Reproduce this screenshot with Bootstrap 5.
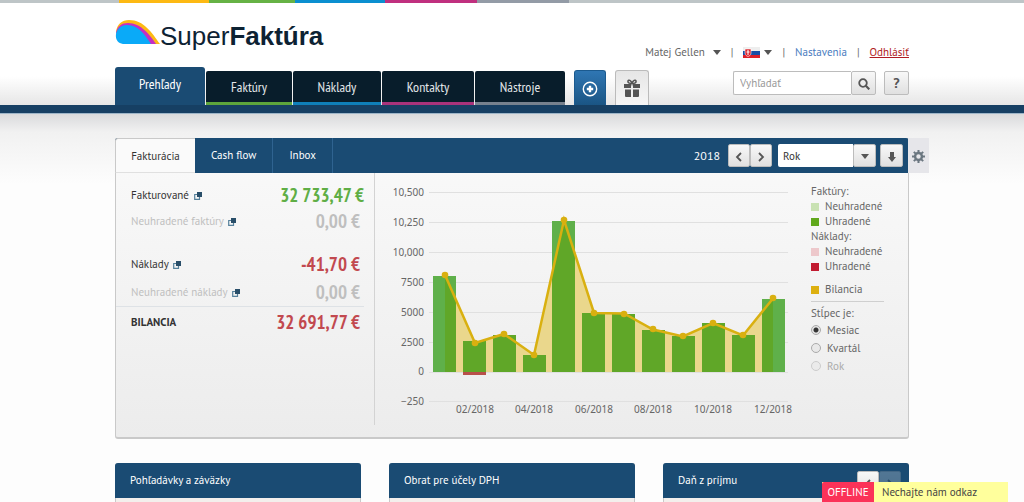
<!DOCTYPE html>
<html lang="sk">
<head>
<meta charset="utf-8">
<meta name="viewport" content="width=device-width, initial-scale=1">
<title>SuperFaktúra – Prehľady</title>
<link href="https://cdn.jsdelivr.net/npm/bootstrap@5.3.0/dist/css/bootstrap.min.css" rel="stylesheet">
<style>
:root{--navy:#1a4b73;--line:#c9c9c9}
body{font-family:"PT Sans",Lato,"Noto Sans",sans-serif;font-size:11px;line-height:16px;color:#333;background:#fdfdfd}
button,input,select{font-family:inherit;font-size:11px}
.wrap{width:100%;max-width:794px;margin:0 auto}
.stripe{height:3px;background:#bec5c7}
.stripe span{height:3px}
.s-y{width:90px;background:#fdb913}.s-g{width:86px;background:#66b245}.s-b{width:90px;background:#0b8fd0}.s-m{width:92px;background:#c0307f}.s-s{width:92px;background:#939ba6}
.site-head{background:linear-gradient(#fff 72%,#e6e6e6);padding-top:16px}
.logo-line{height:48px;color:#0d2233;font:26px/34px "Liberation Sans",Arial,sans-serif}
.narrow{font-family:"PT Sans Narrow","Roboto Condensed",Lato,sans-serif}
.main-tabs{gap:1px}
.main-tabs a{height:34px;line-height:33px;font-size:14px;color:#e2e6e9;background:#081d2b;text-align:center;text-decoration:none;border-radius:2px 2px 0 0;border-bottom:3px solid}
.main-tabs a.current{width:90px;height:38px;line-height:35px;background:var(--navy);border-color:var(--navy);color:#fff;border-radius:3px 3px 0 0}
.t-g{width:86px;border-color:#5da53c!important}.t-b{width:88px;border-color:#0f7fb9!important}.t-m{width:92px;border-color:#a8337b!important}.t-s{width:90px;border-color:#76818e!important}
.sq{width:32px;height:35px;border:1px solid #1b5a8f;border-bottom:0;border-radius:3px 3px 0 0;background:linear-gradient(#2f76b3,#1a5584);padding:0}
.sq.light{width:34px;border-color:#bbb;background:linear-gradient(#e6e6e6,#f6f6f6)}
.bar{height:9px;background:#163f63;border-bottom:1px solid #9db5c8}
.shade{background:linear-gradient(#d9dadc,#f1f1f1 18px,#fdfdfd 70px)}
.user{gap:10px;color:#666;margin-bottom:7px}
.user button{border:0;background:none;padding:0;color:#666}
.user a{text-decoration:none;color:#4a7cc0}
.user a.out{color:#b01c24;text-decoration:underline}
.grey-btn{border:1px solid #bcbcbc;background:linear-gradient(#f8f8f8,#e0e0e0);border-radius:2px;color:#555;padding:0}
.grey-btn svg,.sq svg,.gear svg{vertical-align:middle}
.mark-q{font-size:14px;line-height:20px}
.search{margin-bottom:10px}
.find{width:118px;height:24px;border:1px solid #bcbcbc;border-right:0;border-radius:2px 0 0 2px;padding:0 6px;color:#555;background:#fff}
.find::placeholder{color:#999}
.panel{border:1px solid var(--line);border-bottom-width:2px;border-radius:3px;background:linear-gradient(#fafafa,#ececec)}
.panel-head{height:35px;margin:-1px -1px 0;background:var(--navy);border-radius:3px 3px 0 0;color:#fff}
.panel-head a{height:35px;line-height:34px;color:#fff;text-decoration:none;text-align:center;border-right:1px solid #2f6390}
.panel-head a.current{width:80px;color:#333;background:#fafafa;border:1px solid var(--line);border-right:0;border-bottom-color:#e0e0e0;border-radius:3px 0 0 0}
.year{font-size:12px}
.ctl{height:23px}
.next{margin-right:6px}
.rok{width:75px;border:0;border-radius:2px 0 0 2px;background:#fff;appearance:none;padding:0 5px;color:#333}
.gear{position:absolute;left:100%;top:-1px;width:21px;height:35px;background:#e6e6ea;border:0;padding:0}
.sums{width:259px;padding:9px 10px 0 0;border-right:1px solid #d3d3d3;margin-bottom:12px}
.sums .item{height:26px;padding-left:15px}
.sums .tall{height:28px}
.sums .last{height:30px}
.sums a{color:#333;text-decoration:none}
.sums a svg{margin-left:2px}
.sums .pale a,.pale .amt{color:#bfbfbf}
.amt{font-size:19px;font-weight:700;color:#c2494f;padding-right:4px}
.amt.plus{color:#5fae45;padding-right:0}
.legend{width:97px;padding-top:11px;line-height:15px;color:#666}
.key{width:8px;height:8px;margin-right:6px}
.legend input{appearance:none;width:10px;height:10px;border:1px solid #aaa;border-radius:50%;background:#e8e8e8;margin:0 6px 0 0}
.legend input:checked{background:radial-gradient(#333 2px,#e4e4e4 3px)}
.legend label{height:18px}
.chart text{font-family:"Noto Sans",sans-serif;font-size:10px;fill:#666}
.boxes{gap:28px}
.box{border:1px solid var(--line);border-bottom:0;background:#f3efec;border-radius:3px 3px 0 0}
.box h2{height:35px;margin:-1px -1px 0;padding-left:15px;font-size:11px;font-weight:400;line-height:34px;color:#fff;background:var(--navy);border-radius:3px 3px 0 0}
.box h2 button{line-height:20px}
.chat{right:16px;bottom:0;height:20px;line-height:20px;background:#ffff9c;color:#444;width:186px;text-decoration:none}
.chat b{width:52px;background:#fb3258;color:#fff;font-weight:400;text-align:center;border-radius:2px 0 0 0}
</style>
<script src="https://cdn.jsdelivr.net/npm/bootstrap@5.3.0/dist/js/bootstrap.bundle.min.js"></script>
</head>
<body class="d-flex flex-column min-vh-100">
<svg class="d-none">
  <symbol id="ext" viewBox="0 0 8 8"><path d="M3 2.500H.700v4.800h4.800V5" fill="none" stroke="#56819b" stroke-width="1.200"/><path d="M3 0h5v5H3z" fill="#294e69"/></symbol>
  <symbol id="lt" viewBox="0 0 8 10"><path d="M6 1 2 5l4 4" fill="none" stroke="#555" stroke-width="1.800"/></symbol>
  <symbol id="gt" viewBox="0 0 8 10"><path d="m2 1 4 4-4 4" fill="none" stroke="#555" stroke-width="1.800"/></symbol>
  <symbol id="down" viewBox="0 0 8 5"><path d="M0 0h8L4 5z" fill="#555"/></symbol>
</svg>
<div class="stripe"><div class="wrap d-flex ps-1"><span class="s-y"></span><span class="s-g"></span><span class="s-b"></span><span class="s-m"></span><span class="s-s"></span></div></div>
<header class="site-head">
  <div class="wrap d-flex justify-content-between align-items-end">
    <div class="logo-line d-flex">
      <svg width="45" height="26" viewBox="0 0 45 26"><path d="M1 13C2 5 7 1 14 1c15 0 23 13 31 24H12z" fill="#fdb913"/><path d="M1 14C2 7 7 4 13 4c13 0 22 12 28 21H12z" fill="#c52fc3"/><path d="M8 25C-3 24-1 6 12 6c12 0 18 10 24 19z" fill="#0aaaf8"/></svg>
      <span>Super<b>Faktúra</b></span>
    </div>
    <div class="user d-flex align-items-center text-nowrap">
      <button class="d-flex align-items-center gap-2">Matej Gellen <svg width="8" height="5"><use href="#down"/></svg></button><span>|</span>
      <button class="d-flex align-items-center gap-1" aria-label="Jazyk"><svg width="17" height="11" viewBox="0 0 17 11"><path d="M0 0h17v4H0z" fill="#eee"/><path d="M0 4h17v4H0z" fill="#174ea6"/><path d="M0 8h17v3H0z" fill="#dc2029"/><path d="M2 2h6v4c0 2-1.500 3-3 3.500C3.500 9 2 8 2 6z" fill="#dc2029" stroke="#fff" stroke-width=".6"/><path d="M5 3v5M3.500 5h3" stroke="#fff"/></svg> <svg width="8" height="5"><use href="#down"/></svg></button>
      <span>|</span><a href="#">Nastavenia</a><span>|</span><a class="out" href="#">Odhlásiť</a>
    </div>
  </div>
  <div class="wrap d-flex justify-content-between align-items-end">
    <nav class="main-tabs d-flex align-items-end narrow">
      <a class="current" href="#">Prehľady</a><a class="t-g" href="#">Faktúry</a><a class="t-b" href="#">Náklady</a><a class="t-m" href="#">Kontakty</a><a class="t-s" href="#">Nástroje</a>
      <button class="sq ms-2" aria-label="Pridať"><svg width="16" height="16" viewBox="0 0 16 16"><circle cx="8" cy="8" r="6.700" fill="none" stroke="#fff" stroke-width="1.400"/><path d="M8 4.800v6.400M4.800 8h6.400" stroke="#fff" stroke-width="2.400"/></svg></button>
      <button class="sq light ms-2" aria-label="Darček"><svg width="16" height="18" viewBox="0 0 16 18"><path d="M0 5h7v4H0zM9 5h7v4H9zM1 10.500h6V18H2a1 1 0 0 1-1-1zM9 10.500h6V17a1 1 0 0 1-1 1H9z" fill="#555"/><path d="M8 4.500C5 4.500 3.500 3.500 4 2s3-1 4 2.500C9 1 11.500.500 12 2s-1 2.500-4 2.500" fill="none" stroke="#555" stroke-width="1.600"/></svg></button>
    </nav>
    <form class="search d-flex">
      <input class="find" type="search" placeholder="Vyhľadať" aria-label="Vyhľadať">
      <button class="grey-btn" style="width:25px" aria-label="Hľadať"><svg width="12" height="12" viewBox="0 0 12 12"><circle cx="5" cy="5" r="3.800" fill="none" stroke="#555" stroke-width="1.800"/><path d="m7.800 7.800 3.500 3.500" stroke="#555" stroke-width="2.200"/></svg></button>
      <button class="grey-btn mark-q ms-2 fw-bold" style="width:25px" type="button">?</button>
    </form>
  </div>
</header>
<div class="bar"></div>
<main class="shade flex-grow-1 d-flex flex-column pt-4">
  <section class="wrap panel position-relative mb-4">
    <div class="panel-head d-flex align-items-center">
      <a class="current" href="#">Fakturácia</a><a class="px-3" href="#">Cash flow</a><a class="px-3" href="#">Inbox</a>
      <span class="ms-auto me-2 year">2018</span>
      <button class="grey-btn ctl" style="width:22px" aria-label="Predchádzajúci"><svg width="8" height="10"><use href="#lt"/></svg></button><button class="grey-btn ctl next" style="width:22px" aria-label="Nasledujúci"><svg width="8" height="10"><use href="#gt"/></svg></button>
      <select class="rok ctl" aria-label="Obdobie"><option>Rok</option></select><button class="grey-btn ctl me-1" style="width:23px" aria-label="Vybrať"><svg width="8" height="5"><use href="#down"/></svg></button>
      <button class="grey-btn ctl next" style="width:23px" aria-label="Stiahnuť"><svg width="8" height="10" viewBox="0 0 8 10"><path d="M2 0h4v5h2L4 10 0 5h2z" fill="#555"/></svg></button>
    </div>
    <button class="gear" aria-label="Nastavenia panela"><svg width="13" height="13" viewBox="0 0 14 14"><circle cx="7" cy="7" r="3.700" fill="none" stroke="#6b7780" stroke-width="2.600"/><path d="M7 0v3M7 11v3M0 7h3M11 7h3M2 2l2.200 2.200M9.800 9.800 12 12M12 2 9.800 4.200M4.200 9.800 2 12" stroke="#6b7780" stroke-width="2.200"/></svg></button>
    <div class="d-flex">
      <div class="sums">
        <div class="item d-flex justify-content-between align-items-center"><a href="#">Fakturované <svg width="8" height="8"><use href="#ext"/></svg></a><span class="amt plus narrow">32 733,47 €</span></div>
        <div class="item pale d-flex justify-content-between align-items-center"><a href="#">Neuhradené faktúry <svg width="8" height="8"><use href="#ext"/></svg></a><span class="amt narrow">0,00 €</span></div>
        <div class="item tall d-flex justify-content-between align-items-center mt-3"><a href="#">Náklady <svg width="8" height="8"><use href="#ext"/></svg></a><span class="amt narrow">-41,70 €</span></div>
        <div class="item tall pale d-flex justify-content-between align-items-center"><a href="#">Neuhradené náklady <svg width="8" height="8"><use href="#ext"/></svg></a><span class="amt narrow">0,00 €</span></div>
        <div class="item last d-flex justify-content-between align-items-center border-top"><strong>BILANCIA</strong><span class="amt narrow">32 691,77 €</span></div>
      </div>
      <div class="flex-grow-1">
        <svg class="chart w-100 d-block" viewBox="375 173 436 264" role="img" aria-label="Bilancia 2018">
          <path d="M429 192.500h359M429 222.500h359M429 252.500h359M429 282.500h359M429 312.500h359M429 342.500h359M429 372.500h359M429 401.500h359" stroke="#e0e0e0"/>
          <g fill="#5fb04a"><path d="M433 276h23v96h-23zM463 341h23v31h-23zM493 335h23v37h-23zM523 355h23v17h-23zM552 221h23v151h-23zM582 313h23v59h-23zM612 314h23v58h-23zM642 330h23v42h-23zM672 336h23v36h-23zM702 323h23v49h-23zM732 335h23v37h-23zM762 299h23v73h-23z"/></g>
          <path d="M445 276V372H773V299L743 335.500 713 323 683 336.500 653 329.500 624 314 594 313 564 220 534 355 504 334 475 343z" fill="#ead78c"/>
          <path d="M445 276h11v96h-11zM463 341h23v31h-23zM493 335h23v37h-23zM523 355h23v17h-23zM552 221h23v151h-23zM582 313h23v59h-23zM612 314h23v58h-23zM642 330h23v42h-23zM672 336h23v36h-23zM702 323h23v49h-23zM732 335h23v37h-23zM762 299h11v73h-11z" fill="#60a728"/>
          <path d="M445 276h11v23zM552 221h12L552 274zM564 221h11v35zM762 299h11L762 312z" fill="#5fb04a"/>
          <path d="M463 372h23v3h-23z" fill="#b8504a"/>
          <path d="M445 275 475 343 504 334 534 355 564 220 594 313 624 313.500 653 329.500 683 336.500 713 323 743 335.500 773 298.500" fill="none" stroke="#d9b010" stroke-width="2.500"/>
          <g fill="#d9b010"><circle cx="445" cy="275" r="3.300"/><circle cx="475" cy="343" r="3.300"/><circle cx="504" cy="334" r="3.300"/><circle cx="534" cy="355" r="3.300"/><circle cx="564" cy="220" r="3.300"/><circle cx="594" cy="313" r="3.300"/><circle cx="624" cy="314" r="3.300"/><circle cx="653" cy="329" r="3.300"/><circle cx="683" cy="336" r="3.300"/><circle cx="713" cy="323" r="3.300"/><circle cx="743" cy="335" r="3.300"/><circle cx="773" cy="298" r="3.300"/></g>
          <g text-anchor="end"><text x="424" y="196">10,500</text><text x="424" y="226">10,250</text><text x="424" y="256">10,000</text><text x="424" y="286">7500</text><text x="424" y="316">5000</text><text x="424" y="346">2500</text><text x="424" y="375">0</text><text x="424" y="405">−250</text></g>
          <g text-anchor="middle"><text x="475" y="413">02/2018</text><text x="534" y="413">04/2018</text><text x="594" y="413">06/2018</text><text x="653" y="413">08/2018</text><text x="713" y="413">10/2018</text><text x="773" y="413">12/2018</text></g>
        </svg>
      </div>
      <div class="legend">
        <div>Faktúry:</div>
        <div class="d-flex align-items-center"><span class="key" style="background:#c9e2b3"></span>Neuhradené</div>
        <div class="d-flex align-items-center"><span class="key" style="background:#60a81c"></span>Uhradené</div>
        <div>Náklady:</div>
        <div class="d-flex align-items-center"><span class="key" style="background:#edc8cb"></span>Neuhradené</div>
        <div class="d-flex align-items-center"><span class="key" style="background:#c11b30"></span>Uhradené</div>
        <div class="d-flex align-items-center pt-2"><span class="key" style="background:#ddb010"></span>Bilancia</div>
        <hr class="mt-1 mb-0 me-4 pb-1">
        <div>Stĺpec je:</div>
        <label class="d-flex align-items-center"><input type="radio" name="col" checked>Mesiac</label>
        <label class="d-flex align-items-center"><input type="radio" name="col">Kvartál</label>
        <label class="d-flex align-items-center opacity-50"><input type="radio" name="col" disabled>Rok</label>
      </div>
    </div>
  </section>
  <div class="wrap boxes d-flex flex-grow-1">
    <section class="box flex-fill w-100"><h2>Pohľadávky a záväzky</h2></section>
    <section class="box flex-fill w-100"><h2>Obrat pre účely DPH</h2></section>
    <section class="box flex-fill w-100"><h2 class="d-flex">Daň z príjmu<button class="grey-btn ctl ms-auto mt-2" style="width:22px" aria-label="Späť"><svg width="8" height="10"><use href="#lt"/></svg></button><button class="grey-btn ctl me-2 mt-2 opacity-25" style="width:22px" disabled aria-label="Ďalej"><svg width="8" height="10"><use href="#gt"/></svg></button></h2></section>
  </div>
</main>
<a class="chat position-fixed d-flex" href="#"><b>OFFLINE</b><span class="ps-2">Nechajte nám odkaz</span></a>
</body>
</html>
